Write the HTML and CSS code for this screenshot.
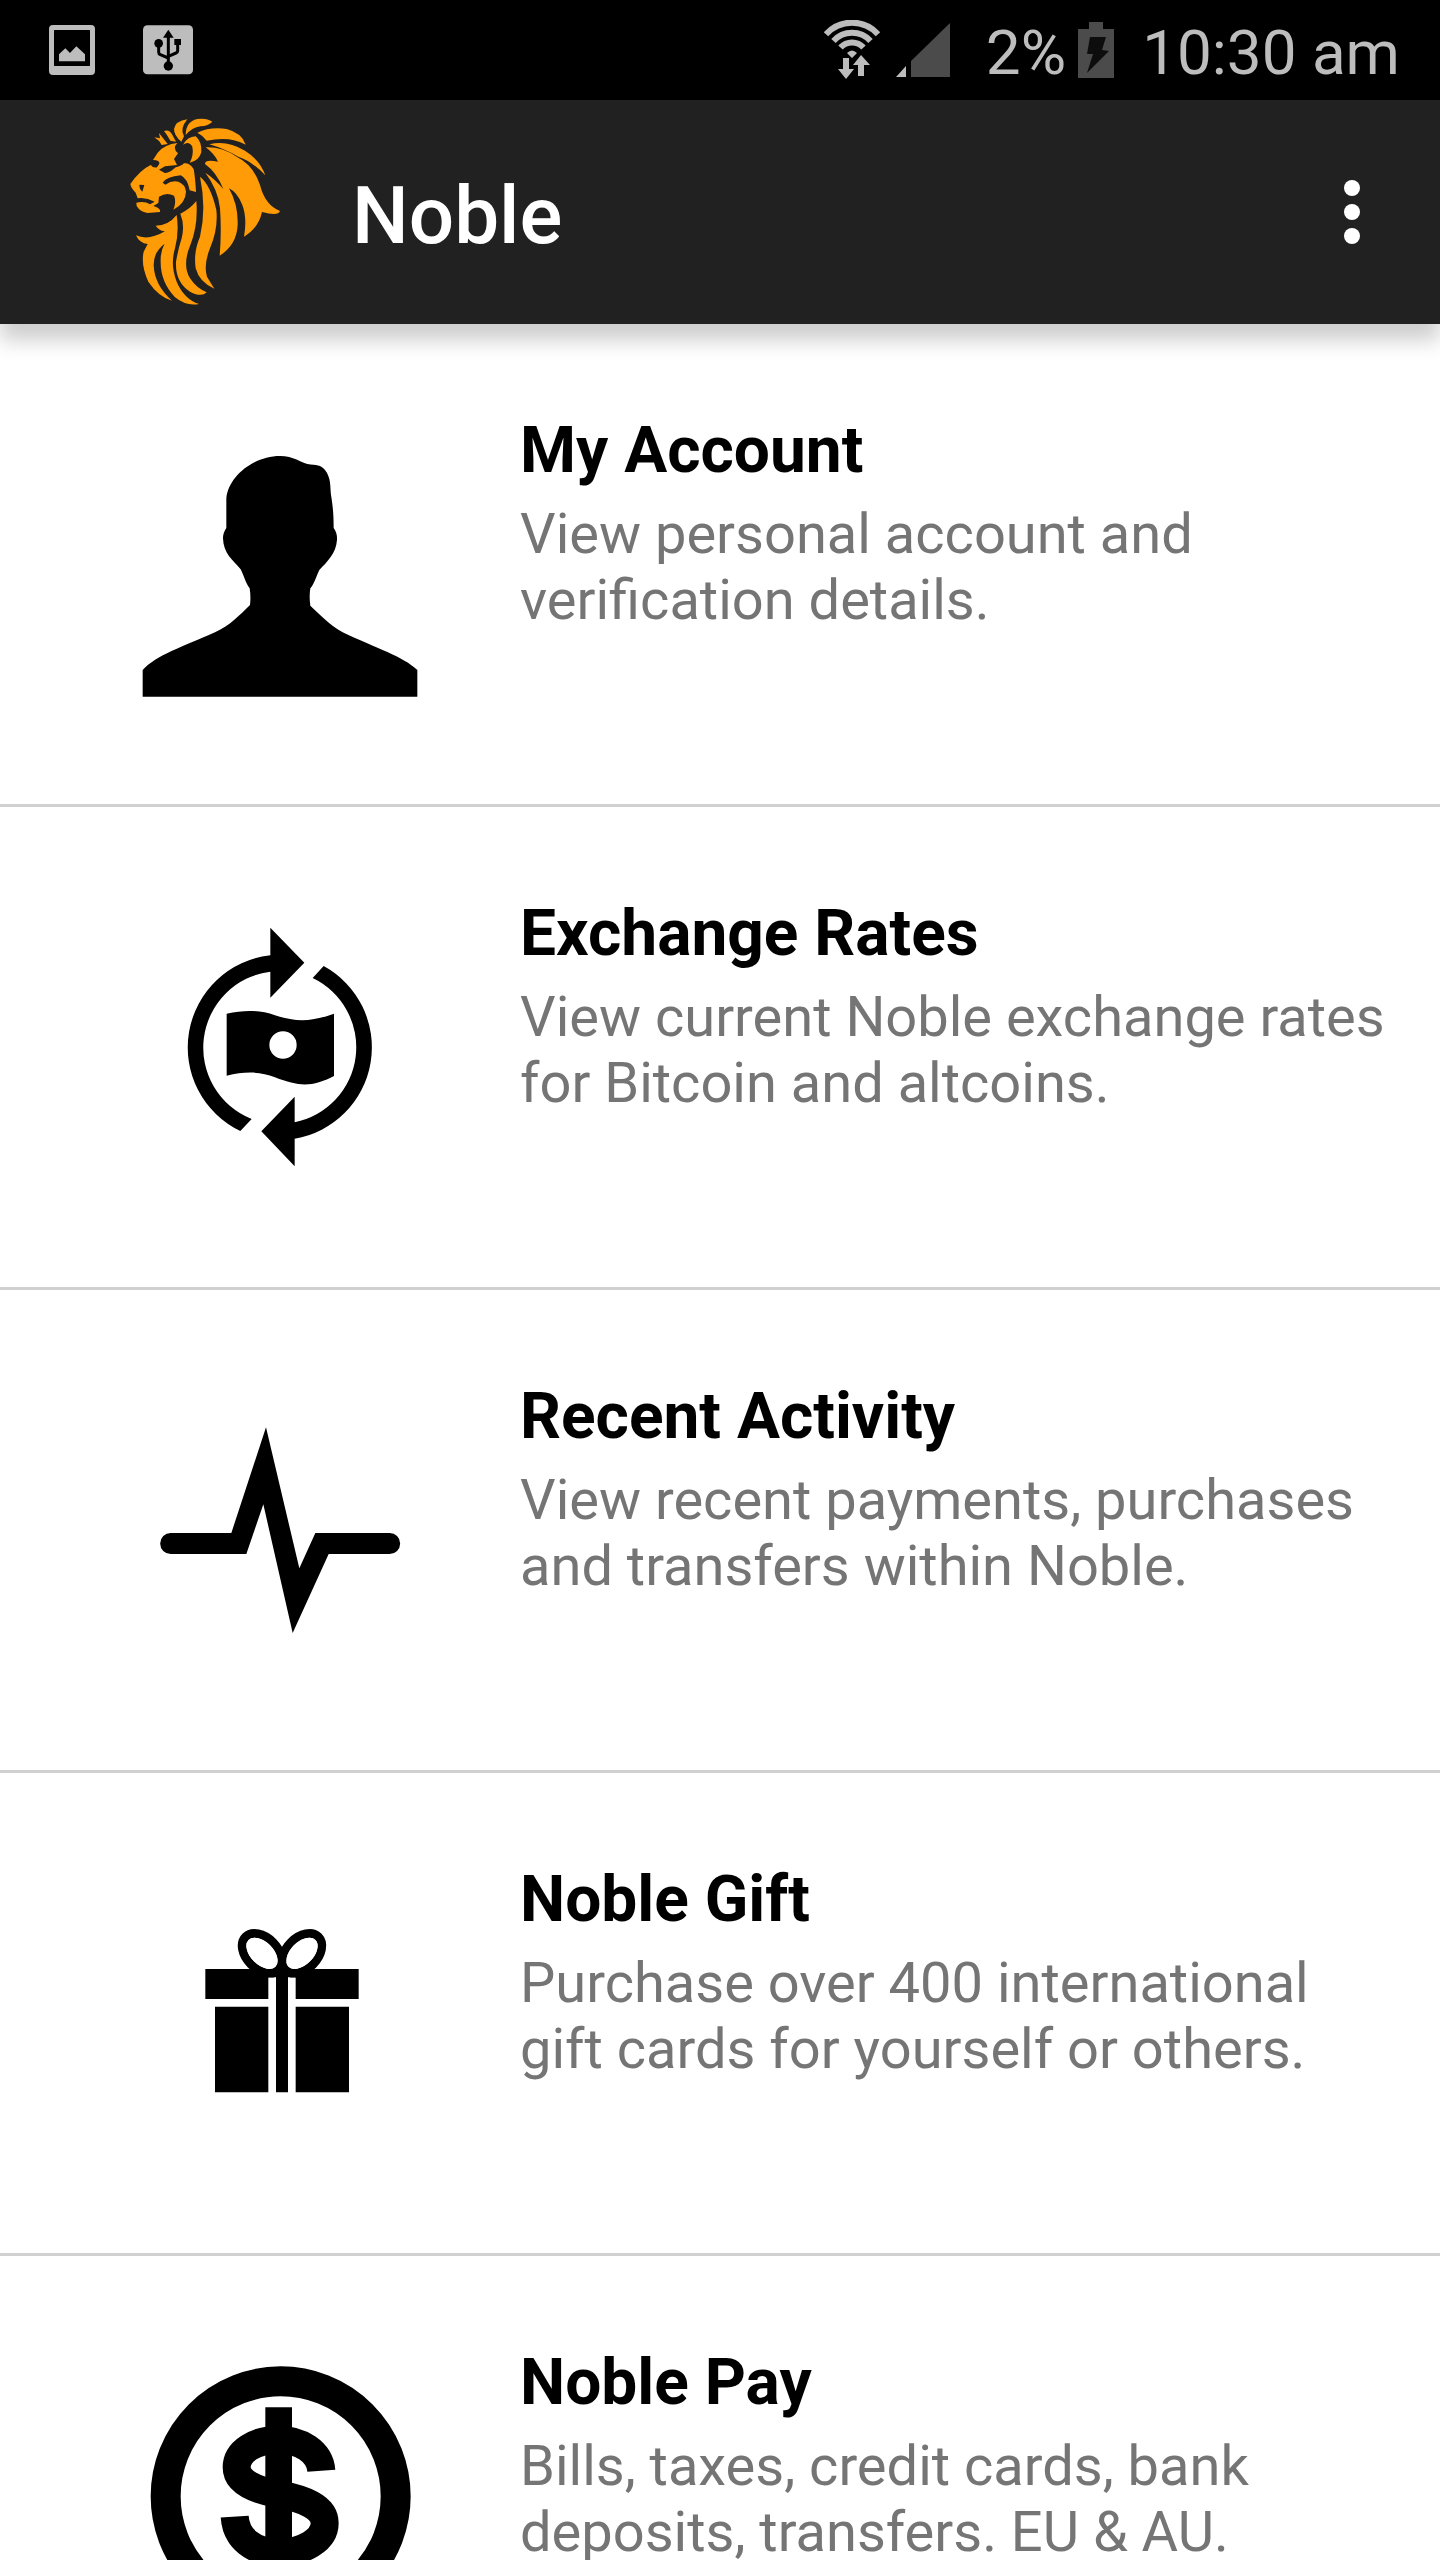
FILE: index.html
```
<!DOCTYPE html>
<html lang="en">
<head>
    <meta charset="UTF-8">
    <meta name="viewport" content="width=device-width, initial-scale=1.0">
    <title>Noble</title>
    <link rel="stylesheet" href="styles.css">
</head>
<body>
    <div class="status-bar">
        <div class="status-notifications">
            <svg width="46" height="50" viewBox="147 72 138 150">
                <path fill="#bdbdbd" fill-rule="evenodd" d="M159 72H273Q285 72 285 84V210Q285 222 273 222H159Q147 222 147 210V84Q147 72 159 72ZM162 87V195H270V87Z"/>
                <path fill="#bdbdbd" d="M177 181V160L196 142L210 156L229 136L255 160V181Z"/>
            </svg>
            <svg width="50" height="50" viewBox="429 72 150 150">
                <rect x="429" y="73" width="150" height="147" rx="13" fill="#bdbdbd"/>
                <path d="M505 86L521 110H489Z"/>
                <path d="M505 105V190M476 130V154Q476 159 481 161L505 171M533 125V150Q533 154 528 156L505 166" fill="none" stroke="#000" stroke-width="9"/>
                <circle cx="476" cy="127" r="13"/>
                <rect x="523" y="114" width="20" height="18"/>
                <circle cx="505" cy="195" r="14"/>
            </svg>
        </div>
        <div class="status-system">
            <svg width="56" height="60" viewBox="0 0 56 60">
                <path d="M2 14.200A35 35 0 0 1 54 14.200M9.500 21A25 25 0 0 1 46.500 21M16.500 27.500A15.500 15.500 0 0 1 39.500 27.500" fill="none" stroke="#bdbdbd" stroke-width="6"/>
                <path fill="#bdbdbd" d="M23 33Q28 28 33 33L28 38ZM19 38H25V49H30L22 59L14 49H19ZM37 35L46 45H40V56H34V45H29Z"/>
            </svg>
            <svg class="signal-icon" width="54" height="54" viewBox="0 0 54 54">
                <path fill="#bdbdbd" d="M0 54L10 43V54Z"/>
                <path fill="#4b4b4b" d="M15 38L54 0V54H15Z"/>
            </svg>
            <span class="battery-level">2%</span>
            <svg class="battery-icon" width="36" height="56" viewBox="0 0 36 56">
                <path fill="#4b4b4b" d="M11 0H25V7H36V56H0V7H11Z"/>
                <path fill="#0d0d0d" d="M12 15H28L24 28L31 29L9 51L15 32H9Z"/>
            </svg>
            <span class="clock">10:30 am</span>
        </div>
    </div>

    <header class="toolbar">
        <svg class="logo" width="190" height="210" viewBox="0 6 570 630" fill="#ff9b06">
            <!-- crown -->
            <path d="M133 97L150 100L147 84L166 108L173 117L155 120Q147 105 133 97Z"/>
            <path d="M162 78Q178 72 186 88L198 110L181 107Q172 90 162 78Z"/>
            <path d="M232 43Q196 48 192 72Q192 92 214 110L222 94Q208 72 232 43Z"/>
            <path d="M227 90Q227 50 262 42Q290 38 307 50Q296 62 271 64Q246 68 227 90Z"/>
            <path d="M262 83Q300 65 350 72Q396 84 407 119Q360 92 290 107Q280 92 262 83Z"/>
            <!-- ear -->
            <path d="M219 119Q232 95 257 94Q276 110 274 142Q267 168 239 173Q252 150 247 125Q237 107 219 119Z"/>
            <!-- face -->
            <path fill-rule="evenodd" d="M202 114Q165 117 143 143L129 165Q150 166 148 176L141 187Q130 190 122 180Q90 195 61 237Q63 250 77 263L83 280Q108 276 134 290L120 298Q105 288 79 293L80 303Q90 320 112 324L150 321Q154 310 130 303L145 294L147 275Q170 260 192 272Q200 290 190 314Q227 295 228 260Q226 238 205 230Q186 225 166 239L158 233Q170 215 212 211Q232 220 239 256L258 261Q256 220 251 192Q238 172 222 175Q215 183 197 187Q175 207 163 203L147 194L165 184L201 180L192 162L204 145Q186 130 202 114ZM88 239L103 240L97 260Q88 252 88 239Z"/>
            <!-- mane -->
            <path d="M298 118Q350 104 405 137Q450 165 466 211Q425 168 385 155Q340 130 298 118Z"/>
            <path d="M287 127Q335 125 380 155Q430 180 450 240Q465 300 510 318Q505 334 456 321Q445 370 402 395Q412 340 397 300Q382 262 357 250Q385 300 383 360Q380 420 329 452Q335 380 330 310Q325 255 286 203Q315 222 340 252Q320 202 285 177Q285 162 324 170Q312 145 287 127Z"/>
            <path d="M270 215Q302 240 319 315Q325 370 300 430Q280 480 291 515L313 551Q268 532 257 490Q250 440 270 395Q290 310 270 215Z"/>
            <path d="M259 288Q265 360 241 420Q216 480 240 520Q260 550 290 562Q275 578 240 560Q195 530 198 470Q205 430 215 400Q225 360 211 326Q240 312 259 288Z"/>
            <path d="M200 330Q208 380 195 430Q180 480 200 530Q222 582 267 597Q230 605 195 577Q150 530 152 465Q152 435 164 416Q131 440 131 480Q133 540 186 587Q145 575 115 530Q92 480 101 440L113 417Q88 415 78 391Q115 408 165 379Q148 378 137 362Q175 362 200 330Z"/>
        </svg>
        <h1 class="toolbar-title">Noble</h1>
        <button class="menu-button" type="button" aria-label="More options">
            <span class="dot"></span>
            <span class="dot"></span>
            <span class="dot"></span>
        </button>
    </header>

    <main class="menu-list">
        <a class="menu-item" href="#account">
            <svg class="menu-icon" viewBox="0 -78 960 960">
                <path d="M68 800V720C110 675 185 652 285 607C330 587 362 552 390 525Q393 500 389 475C377 460 372 437 362 418C338 390 310 370 309 325Q309 308 319 294V205C325 140 400 78 480 78C520 78 545 98 562 102C590 106 602 104 615 120C634 145 630 170 633 195C638 225 641 250 641 294Q652 308 651 330C648 370 622 395 598 420C588 440 584 460 571 475Q567 500 571 527C600 555 630 585 668 607C770 655 850 680 892 720V800Z"/>
            </svg>
            <div class="menu-text">
                <h2>My Account</h2>
                <p>View personal account and verification details.</p>
            </div>
        </a>
        <a class="menu-item" href="#rates">
            <svg class="menu-icon" viewBox="-120 -69 960 960">
                <path d="M331 53L433 158L331 263V185A230 230 0 0 0 275 627L241 663A278 278 0 0 1 331 136Z"/>
                <path d="M404 769L304 664L404 560V637A230 230 0 0 0 458 204L491 168A278 278 0 0 1 404 686Z"/>
                <path fill-rule="evenodd" d="M200 311C255 299 300 300 345 316C410 337 455 335 522 311V498C460 530 420 532 345 502C300 484 255 484 200 497ZM369 364A41 41 0 0 0 369 446A41 41 0 0 0 369 364Z"/>
            </svg>
            <div class="menu-text">
                <h2>Exchange Rates</h2>
                <p>View current Noble exchange rates for Bitcoin and altcoins.</p>
            </div>
        </a>
        <a class="menu-item" href="#activity">
            <svg class="menu-icon" viewBox="-60 -120 960 960">
                <path d="M92 369H274L378 52L478 475L526 369H749A31 31 0 0 1 749 432H566L458 669L370 283L319 432H92A31 31 0 0 1 92 369Z"/>
            </svg>
            <div class="menu-text">
                <h2>Recent Activity</h2>
                <p>View recent payments, purchases and transfers within Noble.</p>
            </div>
        </a>
        <a class="menu-item" href="#gift">
            <svg class="menu-icon" viewBox="-180 -141 960 960">
                <path d="M76 207H536V297H347V232H324V577H288V232H265V297H76ZM105 320H265V577H105ZM347 320H507V577H347Z"/>
                <g fill="none" stroke="#000" stroke-width="26">
                    <ellipse cx="246" cy="160" rx="70" ry="47" transform="rotate(45 246 160)"/>
                    <ellipse cx="366" cy="160" rx="70" ry="47" transform="rotate(-45 366 160)"/>
                </g>
                <ellipse cx="246" cy="160" rx="57" ry="34" transform="rotate(45 246 160)" fill="#fff"/>
                <ellipse cx="366" cy="160" rx="57" ry="34" transform="rotate(-45 366 160)" fill="#fff"/>
            </svg>
            <div class="menu-text">
                <h2>Noble Gift</h2>
                <p>Purchase over 400 international gift cards for yourself or others.</p>
            </div>
        </a>
        <a class="menu-item" href="#pay">
            <svg class="menu-icon" viewBox="-30 -12 960 960">
                <g fill="none" stroke="#000">
                    <circle cx="452" cy="469" r="345" stroke-width="90"/>
                    <path stroke-width="84" d="M574 392C570 335 510 299 446 299C375 299 320 335 320 382C320 425 375 450 446 463C520 477 584 500 584 550C584 600 520 637 446 637C370 637 318 595 314 530"/>
                    <path stroke-width="80" d="M446 202V735"/>
                </g>
            </svg>
            <div class="menu-text">
                <h2>Noble Pay</h2>
                <p>Bills, taxes, credit cards, bank deposits, transfers. EU &amp; AU.</p>
            </div>
        </a>
    </main>
</body>
</html>
```

FILE: styles.css
```
* {
    margin: 0;
    padding: 0;
    box-sizing: border-box;
}

body {
    font-family: Roboto, "Liberation Sans", sans-serif;
    background: #fff;
    color: #000;
    height: 100vh;
    display: flex;
    flex-direction: column;
}

svg {
    display: block;
    flex-shrink: 0;
}

/* Status bar */
.status-bar {
    flex-shrink: 0;
    height: 100px;
    padding: 0 40px 0 49px;
    background: #000;
    color: #bdbdbd;
    font-size: 62px;
    line-height: 76px;
    display: flex;
    align-items: center;
    justify-content: space-between;
}

.status-notifications {
    display: flex;
    align-items: center;
    gap: 48px;
}

.status-system {
    display: flex;
    align-items: center;
}

.signal-icon {
    margin-left: 16px;
    margin-right: 36px;
}

.battery-icon {
    margin-left: 12px;
    margin-right: 28px;
}

.battery-level,
.clock {
    padding-top: 6px;
}

/* Toolbar */
.toolbar {
    position: relative;
    z-index: 1;
    flex-shrink: 0;
    height: 224px;
    padding: 0 48px 0 110px;
    background: #212121;
    box-shadow: 0 16px 20px rgba(0, 0, 0, 0.2);
    display: flex;
    align-items: center;
}

.toolbar-title {
    margin-left: 52px;
    padding-top: 8px;
    color: #fff;
    font-size: 80px;
    font-weight: 500;
    line-height: 94px;
}

.menu-button {
    margin-left: auto;
    width: 80px;
    height: 160px;
    border: 0;
    background: none;
    display: flex;
    flex-direction: column;
    align-items: center;
    justify-content: center;
    gap: 8px;
    cursor: pointer;
}

.dot {
    width: 16px;
    height: 16px;
    border-radius: 50%;
    background: #fff;
}

/* Menu */
.menu-list {
    flex: 1;
    min-height: 0;
    overflow-y: auto;
    scrollbar-width: none;
}

.menu-item {
    display: flex;
    gap: 80px;
    padding: 80px 48px 80px 120px;
    border-bottom: 3px solid #d0d0d0;
    color: #000;
    text-decoration: none;
}

.menu-icon {
    width: 320px;
    height: 320px;
}

.menu-text {
    flex: 1;
    padding-top: 9px;
}

.menu-text h2 {
    margin-bottom: 12px;
    font-size: 64px;
    font-weight: 700;
    line-height: 76px;
}

.menu-text p {
    color: #757575;
    font-size: 56px;
    line-height: 66px;
}
```
